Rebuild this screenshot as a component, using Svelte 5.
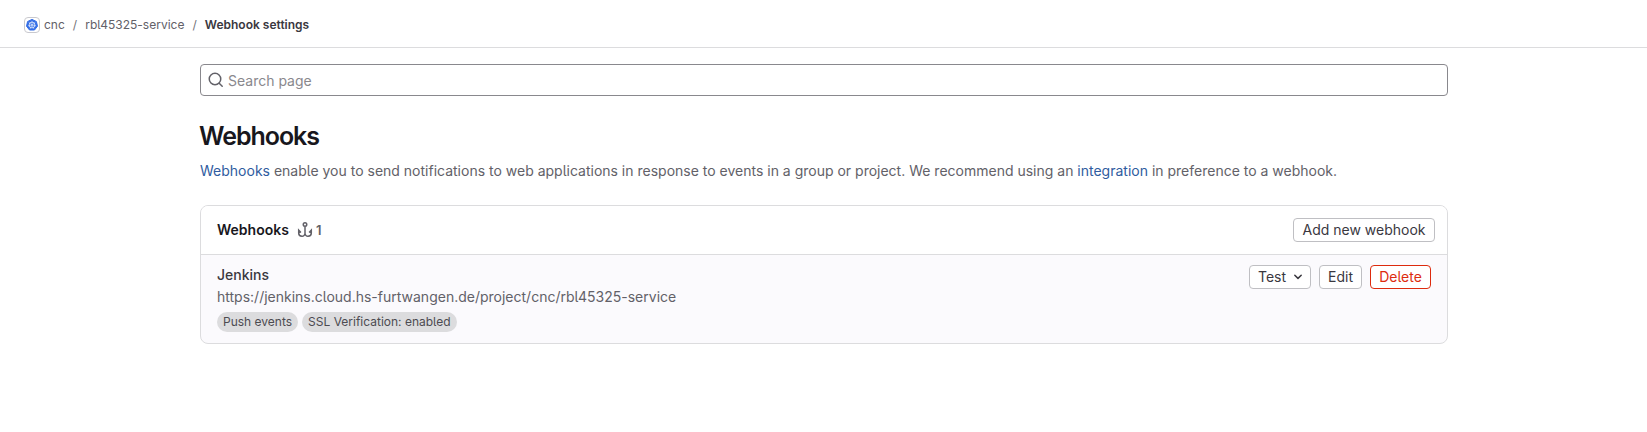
<script>
  const crumbs = ['cnc', 'rbl45325-service'];
  const tags = ['Push events', 'SSL Verification: enabled'];
</script>

<div class="page">
  <nav class="topbar" aria-label="Breadcrumb">
    <svg class="avatar" width="16" height="16" viewBox="0 0 16 16">
      <rect x=".5" y=".5" width="15" height="15" rx="3.5" fill="#fff" stroke="#c9c9ce" />
      <path d="M8 2.4l4.4 2.1 1.1 4.7-3 3.8h-5l-3-3.8 1.1-4.7z" fill="#326de6" stroke="#326de6" stroke-linejoin="round" />
      <circle cx="8" cy="8" r="2.9" fill="none" stroke="#fff" stroke-width=".7" />
      <path d="M8 3.8V8m3.3-2.6L8 8m4.1.9L8 8m1.8 3.8L8 8m-1.8 3.8L8 8m-4.1.9L8 8M4.7 5.4 8 8" stroke="#fff" stroke-width=".5" />
    </svg>
    {#each crumbs as crumb}
      <a href="#top">{crumb}</a><span class="slash">/</span>
    {/each}
    <strong>Webhook settings</strong>
  </nav>

  <main>
    <label class="search">
      <svg width="16" height="16" viewBox="0 0 16 16" fill="none" stroke="#626168" stroke-width="1.5" stroke-linecap="round">
        <circle cx="7" cy="7" r="5.75" />
        <path d="M11.2 11.2 14.2 14.2" />
      </svg>
      <input placeholder="Search page" />
    </label>

    <h1>Webhooks</h1>
    <p class="intro">
      <a href="#top">Webhooks</a> enable you to send notifications to web applications in response to events in a group or project. We recommend using an <a href="#top">integration</a> in preference to a webhook.
    </p>

    <section class="card">
      <header>
        <h2>Webhooks</h2>
        <svg class="hook" width="16" height="16" viewBox="0 0 16 16" fill="none" stroke="#626168" stroke-width="1.5">
          <circle cx="8" cy="2.6" r="1.75" />
          <path d="M8 4.4v7.1a2.8 2.8 0 0 0 3.1 2.7c2-.1 3.2-1.4 3.2-3.3V8.2l-2.2 2.3M8 11.5a2.8 2.8 0 0 1-3.1 2.7c-2-.1-3.2-1.4-3.2-3.3V8.2l2.2 2.3" />
        </svg>
        <span class="count">1</span>
        <button class="add">Add new webhook</button>
      </header>
      <div class="row">
        <div class="info">
          <div class="name">Jenkins</div>
          <div class="url">https://jenkins.cloud.hs-furtwangen.de/project/cnc/rbl45325-service</div>
          <div class="tags">
            {#each tags as tag}<span>{tag}</span>{/each}
          </div>
        </div>
        <div class="actions">
          <button class="test">Test
            <svg width="16" height="16" viewBox="0 0 16 16" fill="none" stroke="#3a383f" stroke-width="1.5" stroke-linecap="round" stroke-linejoin="round"><path d="m4.8 6.2 3.2 3.2 3.2-3.2" /></svg>
          </button>
          <button class="edit">Edit</button>
          <button class="danger">Delete</button>
        </div>
      </div>
    </section>
  </main>
</div>

<style>
  :global(body) { background: #fff; }
  .page { height: 432px; overflow: hidden; font-family: Inter, sans-serif; font-size: 14px; line-height: 20px; color: #3a383f; font-feature-settings: "cv05"; }
  .page * { box-sizing: border-box; }
  a { text-decoration: none; }
  .topbar { display: flex; align-items: center; height: 48px; padding: 2px 24px 0; border-bottom: 1px solid #dcdcde; font-size: 12px; line-height: 16px; }
  .topbar a { color: #626168; }
  .avatar { margin-right: 4px; }
  .slash { width: 20.4px; text-align: center; color: #737278; }
  .topbar strong { font-weight: 600; }
  main { width: 1248px; margin: 16px 0 0 200px; }
  .search { display: flex; align-items: center; height: 32px; padding-left: 7px; border: 1px solid #89888d; border-radius: 4px; }
  input { flex: 1; min-width: 0; height: 20px; margin: 2px 0 0 4px; padding: 0; border: 0; outline: 0; background: none; font: inherit; }
  input::placeholder { color: #89888d; opacity: 1; }
  h1 { margin: 24px 0 0 -1px; font-size: 25px; line-height: 32px; font-weight: 600; letter-spacing: -1.05px; color: #18171d; }
  .intro { margin: 9px 0 0; color: #626168; white-space: nowrap; }
  .intro a { color: #2f5ca0; }
  .card { height: 139px; margin-top: 24px; border: 1px solid #dcdcde; border-radius: 8px; background: #fbfafd; overflow: hidden; }
  header { display: flex; align-items: center; height: 49px; padding: 0 12px 0 16px; border-bottom: 1px solid #dcdcde; background: #fff; }
  h2 { margin: 0; font-size: 14px; line-height: 20px; font-weight: 600; color: #18171d; }
  .hook { margin: 0 3px 0 8px; }
  .count { font-size: 13px; font-weight: 600; color: #626168; }
  .add { width: 142px; margin-left: auto; }
  button { height: 24px; padding: 0; border: 1px solid #bfbfc3; border-radius: 4px; background: #fff; color: #3a383f; font: inherit; font-feature-settings: inherit; line-height: 22px; white-space: nowrap; text-align: center; }
  .row { display: flex; justify-content: space-between; padding: 10px 16px; }
  .info { margin-top: -1px; }
  .name { margin-bottom: 1px; font-weight: 500; line-height: 21px; }
  .url { color: #626168; line-height: 21px; }
  .tags { display: flex; gap: 4px; margin-top: 5px; }
  .tags span { height: 20px; padding: 0 6px; border-radius: 10px; background: #dcdcde; color: #4c4b51; font-size: 12px; line-height: 20px; }
  .actions { display: flex; align-items: flex-start; gap: 8px; }
  .test { display: flex; align-items: center; justify-content: space-between; width: 62px; padding: 0 4px 0 8px; }
  .edit { width: 43px; }
  .danger { width: 61px; color: #dd2b0e; border-color: #dd2b0e; }
</style>
